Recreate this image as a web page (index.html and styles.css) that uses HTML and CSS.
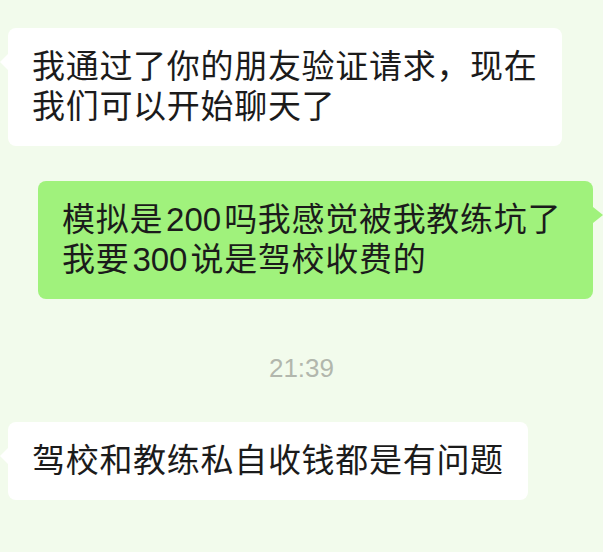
FILE: index.html
```html
<!DOCTYPE html>
<html lang="zh-CN">
<head>
<meta charset="utf-8">
<link rel="stylesheet" href="styles.css">
</head>
<body>
<div class="chat">
  <div class="bubble left b1">我通过了你的朋友验证请求，现在<br>我们可以开始聊天了</div>
  <div class="bubble right b2">模拟是<span class="num">200</span>吗我感觉被我教练坑了<br>我要<span class="num">300</span>说是驾校收费的</div>
  <div class="time">21:39</div>
  <div class="bubble left b3">驾校和教练私自收钱都是有问题</div>
</div>
</body>
</html>
```

FILE: styles.css
```css
html, body {
  margin: 0;
  padding: 0;
  background: #f2fbec;
}
.chat {
  width: 603px;
  height: 552px;
  display: flex;
  flex-direction: column;
  font-family: "Liberation Sans", "Noto Sans CJK SC", sans-serif;
  overflow: hidden;
}
.bubble {
  position: relative;
  box-sizing: border-box;
  font-size: 33px;
  line-height: 40px;
  letter-spacing: 0.7px;
  color: #1b1b1b;
  padding: 19px 24px;
  border-radius: 8px;
  white-space: nowrap;
}
.left {
  align-self: flex-start;
  background: #ffffff;
  margin-left: 8px;
  padding-left: 24px;
}
.right {
  align-self: flex-end;
  background: #a0f27c;
  margin-right: 10px;
}
.left::before {
  content: "";
  position: absolute;
  left: -8px;
  top: 26px;
  border-style: solid;
  border-width: 8px 8px 8px 0;
  border-color: transparent #ffffff transparent transparent;
}
.right::after {
  content: "";
  position: absolute;
  right: -10px;
  top: 26px;
  border-style: solid;
  border-width: 8px 0 8px 10px;
  border-color: transparent transparent transparent #a0f27c;
}
.b1 {
  margin-top: 28px;
  width: 554px;
}
.b2 {
  margin-top: 35px;
  width: 555px;
}
.b3 {
  margin-top: 39px;
  width: 520px;
}
.num {
  margin: 0 3px;
  letter-spacing: 0;
}
.time {
  align-self: center;
  margin-top: 54px;
  font-size: 26px;
  line-height: 30px;
  color: #b2b7ad;
}
```
